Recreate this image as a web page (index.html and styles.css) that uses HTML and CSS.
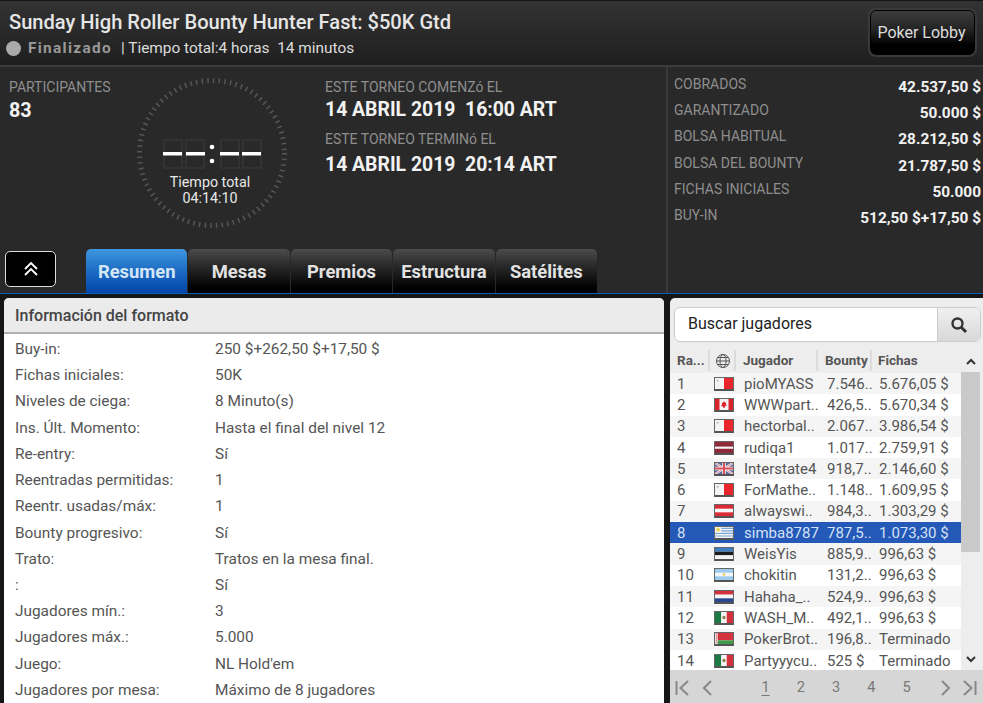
FILE: index.html
```html
<!DOCTYPE html>
<html lang="es">
  <head>
    <meta charset="UTF-8" />
    <title>Sunday High Roller Bounty Hunter Fast</title>
    <link rel="stylesheet" href="styles.css">
  </head>
  <body>
    <svg class="defs" width="0" height="0">
      <symbol id="f-mt" viewBox="0 0 20 12" preserveAspectRatio="none"><rect width="10" height="12" fill="#f4f4f4"/><rect x="10" width="10" height="12" fill="#e8262b"/><rect x="2" y="2" width="2" height="2" fill="#bbb"/></symbol>
      <symbol id="f-ca" viewBox="0 0 20 12" preserveAspectRatio="none"><rect width="20" height="12" fill="#f4f4f4"/><rect width="5" height="12" fill="#d9232a"/><rect x="15" width="5" height="12" fill="#d9232a"/><path d="M10 2l1 2 1.500-.5-.5 3 1-.5v1l-2 1v1.500h-2V8.500l-2-1v-1l1 .5-.5-3L9 4z" fill="#d9232a"/></symbol>
      <symbol id="f-lv" viewBox="0 0 20 12" preserveAspectRatio="none"><rect width="20" height="12" fill="#8e2b3a"/><rect y="5" width="20" height="2.400" fill="#f4f4f4"/></symbol>
      <symbol id="f-gb" viewBox="0 0 20 12" preserveAspectRatio="none"><rect width="20" height="12" fill="#5a6aa0"/><path d="M0 0l20 12M20 0L0 12" stroke="#f4f4f4" stroke-width="2.400"/><path d="M0 0l20 12M20 0L0 12" stroke="#d9606a" stroke-width=".8"/><path d="M10 0v12M0 6h20" stroke="#f4f4f4" stroke-width="4"/><path d="M10 0v12M0 6h20" stroke="#d9505a" stroke-width="2.200"/></symbol>
      <symbol id="f-at" viewBox="0 0 20 12" preserveAspectRatio="none"><rect width="20" height="12" fill="#dc2b35"/><rect y="4" width="20" height="4" fill="#f6f6f6"/></symbol>
      <symbol id="f-uy" viewBox="0 0 20 12" preserveAspectRatio="none"><rect width="20" height="12" fill="#f4f4f4"/><path d="M0 1.500h20M0 4.200h20M0 7h20M0 9.800h20" stroke="#7aa6d8" stroke-width="1.300"/><rect width="7" height="6" fill="#f4f4f4"/><circle cx="3.500" cy="3" r="2" fill="#f0d040"/></symbol>
      <symbol id="f-ee" viewBox="0 0 20 12" preserveAspectRatio="none"><rect width="20" height="4" fill="#3f7fc4"/><rect y="4" width="20" height="4" fill="#1c1c1c"/><rect y="8" width="20" height="4" fill="#f4f4f4"/></symbol>
      <symbol id="f-ar" viewBox="0 0 20 12" preserveAspectRatio="none"><rect width="20" height="12" fill="#9ccbee"/><rect y="4" width="20" height="4" fill="#f6f6f6"/><circle cx="10" cy="6" r="1.300" fill="#ecc94b"/></symbol>
      <symbol id="f-nl" viewBox="0 0 20 12" preserveAspectRatio="none"><rect width="20" height="4" fill="#d3303c"/><rect y="4" width="20" height="4" fill="#f6f6f6"/><rect y="8" width="20" height="4" fill="#27478f"/></symbol>
      <symbol id="f-mx" viewBox="0 0 20 12" preserveAspectRatio="none"><rect width="7" height="12" fill="#1d7a45"/><rect x="7" width="6" height="12" fill="#f4f4f4"/><rect x="13" width="7" height="12" fill="#d3303c"/><circle cx="10" cy="6" r="1.800" fill="#8b7a4a"/></symbol>
      <symbol id="f-by" viewBox="0 0 20 12" preserveAspectRatio="none"><rect width="20" height="8" fill="#d3333c"/><rect y="8" width="20" height="4" fill="#3f9a4a"/><rect width="3" height="12" fill="#efe6e6"/><path d="M1.500 0v12" stroke="#d3333c" stroke-dasharray="1 1"/></symbol>
    </svg>

    <div class="page">
      <header class="top">
        <div class="top-text">
          <h1>Sunday High Roller Bounty Hunter Fast: $50K Gtd</h1>
          <div class="status">
            <span class="dot"></span>
            <b>Finalizado</b>
            <span>| Tiempo total:4 horas&nbsp; 14 minutos</span>
          </div>
        </div>
        <button class="lobby" type="button">Poker Lobby</button>
      </header>

      <section class="info">
        <div class="info-main">
          <div class="info-row">
            <div class="players">
              <div class="lbl">PARTICIPANTES</div>
              <div class="big">83</div>
            </div>
            <svg class="clock" width="152" height="152" viewBox="0 0 152 152">
              <circle cx="76" cy="76" r="72.500" fill="none" stroke="#565656" stroke-width="5" stroke-dasharray="1.500 4.200"/>
              <g class="seg-off">
                <rect x="28" y="63" width="18" height="28"/>
                <rect x="50" y="63" width="18" height="28"/>
                <rect x="85" y="63" width="18" height="28"/>
                <rect x="107" y="63" width="18" height="28"/>
              </g>
              <g fill="#fff">
                <rect x="27" y="75" width="19" height="3.500"/>
                <rect x="50" y="75" width="19" height="3.500"/>
                <rect x="84" y="75" width="19" height="3.500"/>
                <rect x="106" y="75" width="19" height="3.500"/>
                <circle cx="76" cy="70" r="2.300"/>
                <circle cx="76" cy="84" r="2.300"/>
              </g>
              <text class="clock-txt" x="74" y="110" text-anchor="middle">Tiempo total</text>
              <text class="clock-txt" x="74" y="126" text-anchor="middle">04:14:10</text>
            </svg>
            <div class="dates">
              <div class="lbl">ESTE TORNEO COMENZó EL</div>
              <div class="date">14 ABRIL 2019&nbsp; 16:00 ART</div>
              <div class="lbl">ESTE TORNEO TERMINó EL</div>
              <div class="date date-end">14 ABRIL 2019&nbsp; 20:14 ART</div>
            </div>
          </div>
          <nav class="tabs-row">
            <button class="toggle" type="button">
              <svg width="16" height="16" viewBox="0 0 16 16" fill="none" stroke="#fff" stroke-width="1.800"><path d="M2 8l6-6 6 6M2 14l6-6 6 6"/></svg>
            </button>
            <div class="tabs">
              <a class="tab tab-on">Resumen</a>
              <a class="tab">Mesas</a>
              <a class="tab">Premios</a>
              <a class="tab">Estructura</a>
              <a class="tab">Satélites</a>
            </div>
          </nav>
        </div>
        <div class="money">
          <div class="money-row"><span class="lbl">COBRADOS</span><b>42.537,50 $</b></div>
          <div class="money-row"><span class="lbl">GARANTIZADO</span><b>50.000 $</b></div>
          <div class="money-row"><span class="lbl">BOLSA HABITUAL</span><b>28.212,50 $</b></div>
          <div class="money-row"><span class="lbl">BOLSA DEL BOUNTY</span><b>21.787,50 $</b></div>
          <div class="money-row"><span class="lbl">FICHAS INICIALES</span><b>50.000</b></div>
          <div class="money-row"><span class="lbl">BUY-IN</span><b>512,50 $+17,50 $</b></div>
        </div>
      </section>

      <main class="content">
        <section class="format">
          <h2>Información del formato</h2>
          <dl class="format-list">
            <div><dt>Buy-in:</dt><dd>250 $+262,50 $+17,50 $</dd></div>
            <div><dt>Fichas iniciales:</dt><dd>50K</dd></div>
            <div><dt>Niveles de ciega:</dt><dd>8 Minuto(s)</dd></div>
            <div><dt>Ins. Últ. Momento:</dt><dd>Hasta el final del nivel 12</dd></div>
            <div><dt>Re-entry:</dt><dd>Sí</dd></div>
            <div><dt>Reentradas permitidas:</dt><dd>1</dd></div>
            <div><dt>Reentr. usadas/máx:</dt><dd>1</dd></div>
            <div><dt>Bounty progresivo:</dt><dd>Sí</dd></div>
            <div><dt>Trato:</dt><dd>Tratos en la mesa final.</dd></div>
            <div><dt>:</dt><dd>Sí</dd></div>
            <div><dt>Jugadores mín.:</dt><dd>3</dd></div>
            <div><dt>Jugadores máx.:</dt><dd>5.000</dd></div>
            <div><dt>Juego:</dt><dd>NL Hold'em</dd></div>
            <div><dt>Jugadores por mesa:</dt><dd>Máximo de 8 jugadores</dd></div>
          </dl>
        </section>

        <aside class="side">
          <div class="search">
            <span class="search-text">Buscar jugadores</span>
            <span class="search-btn">
              <svg width="18" height="18" viewBox="0 0 18 18" fill="none" stroke="#333"><circle cx="7.500" cy="7.500" r="5" stroke-width="2.400"/><path d="M11.500 11.500l4.500 4.500" stroke-width="3"/></svg>
            </span>
          </div>
          <div class="grid-wrap">
            <div class="grid">
              <div class="grid-head">
                <span>Ra...</span>
                <span class="globe"><svg width="16" height="16" viewBox="0 0 16 16" fill="none" stroke="#555"><circle cx="8" cy="8" r="6.500"/><ellipse cx="8" cy="8" rx="3" ry="6.500"/><path d="M1.500 8h13M2.500 4.500h11M2.500 11.500h11"/></svg></span>
                <span>Jugador</span>
                <span>Bounty</span>
                <span>Fichas</span>
              </div>
              <div class="grid-row"><span>1</span><svg class="flag"><use href="#f-mt"/></svg><span class="name">pioMYASS</span><span>7.546..</span><span>5.676,05 $</span></div>
              <div class="grid-row"><span>2</span><svg class="flag"><use href="#f-ca"/></svg><span class="name">WWWpart..</span><span>426,5..</span><span>5.670,34 $</span></div>
              <div class="grid-row"><span>3</span><svg class="flag"><use href="#f-mt"/></svg><span class="name">hectorbal..</span><span>2.067..</span><span>3.986,54 $</span></div>
              <div class="grid-row"><span>4</span><svg class="flag"><use href="#f-lv"/></svg><span class="name">rudiqa1</span><span>1.017..</span><span>2.759,91 $</span></div>
              <div class="grid-row"><span>5</span><svg class="flag"><use href="#f-gb"/></svg><span class="name">Interstate4</span><span>918,7..</span><span>2.146,60 $</span></div>
              <div class="grid-row"><span>6</span><svg class="flag"><use href="#f-mt"/></svg><span class="name">ForMathe..</span><span>1.148..</span><span>1.609,95 $</span></div>
              <div class="grid-row"><span>7</span><svg class="flag"><use href="#f-at"/></svg><span class="name">alwayswi..</span><span>984,3..</span><span>1.303,29 $</span></div>
              <div class="grid-row is-me"><span>8</span><svg class="flag"><use href="#f-uy"/></svg><span class="name">simba8787</span><span>787,5..</span><span>1.073,30 $</span></div>
              <div class="grid-row"><span>9</span><svg class="flag"><use href="#f-ee"/></svg><span class="name">WeisYis</span><span>885,9..</span><span>996,63 $</span></div>
              <div class="grid-row"><span>10</span><svg class="flag"><use href="#f-ar"/></svg><span class="name">chokitin</span><span>131,2..</span><span>996,63 $</span></div>
              <div class="grid-row"><span>11</span><svg class="flag"><use href="#f-nl"/></svg><span class="name">Hahaha_..</span><span>524,9..</span><span>996,63 $</span></div>
              <div class="grid-row"><span>12</span><svg class="flag"><use href="#f-mx"/></svg><span class="name">WASH_M..</span><span>492,1..</span><span>996,63 $</span></div>
              <div class="grid-row"><span>13</span><svg class="flag"><use href="#f-by"/></svg><span class="name">PokerBrot..</span><span>196,8..</span><span>Terminado</span></div>
              <div class="grid-row"><span>14</span><svg class="flag"><use href="#f-mx"/></svg><span class="name">Partyyycu..</span><span>525 $</span><span>Terminado</span></div>
            </div>
            <div class="scroll">
              <svg class="scroll-arrow" width="12" height="22" viewBox="0 0 12 22" fill="none" stroke="#333" stroke-width="2"><path d="M2 14l4-4 4 4"/></svg>
              <div class="thumb"></div>
              <svg class="scroll-arrow" width="12" height="22" viewBox="0 0 12 22" fill="none" stroke="#333" stroke-width="2"><path d="M2 9l4 4 4-4"/></svg>
            </div>
          </div>
          <div class="pager">
            <svg width="15" height="16" viewBox="0 0 15 16" fill="none" stroke="#888" stroke-width="2"><path d="M1.500 1v14M13 1L5.500 8l7.500 7"/></svg>
            <svg class="pg-prev" width="10" height="16" viewBox="0 0 10 16" fill="none" stroke="#888" stroke-width="2"><path d="M9 1L2 8l7 7"/></svg>
            <a class="pg-num pg-on">1</a>
            <a class="pg-num">2</a>
            <a class="pg-num">3</a>
            <a class="pg-num">4</a>
            <a class="pg-num">5</a>
            <svg class="pg-next" width="10" height="16" viewBox="0 0 10 16" fill="none" stroke="#888" stroke-width="2"><path d="M1 1l7 7-7 7"/></svg>
            <svg width="15" height="16" viewBox="0 0 15 16" fill="none" stroke="#888" stroke-width="2"><path d="M13.500 1v14M2 1l7.500 7L2 15"/></svg>
          </div>
        </aside>
      </main>
    </div>
  </body>
</html>
```

FILE: styles.css
```css
* {
  box-sizing: border-box;
}

html,
body {
  margin: 0;
  height: 100%;
  overflow: hidden;
}

body {
  background: #161616;
  font-family: Roboto, "Liberation Sans", sans-serif;
}

.defs {
  position: absolute;
}

.page {
  width: 983px;
  height: 703px;
  display: flex;
  flex-direction: column;
}

/* top bar */
.top {
  height: 67px;
  flex: none;
  display: flex;
  justify-content: space-between;
  align-items: flex-start;
  padding: 10px 9px 0 9px;
  background: linear-gradient(#333 0%, #1f1f1f 100%);
  border-top: 1px solid #151515;
  border-bottom: 2px solid #3c3c3c;
}

.top h1 {
  margin: 0;
  font-size: 20.100px;
  line-height: 23px;
  font-weight: 500;
  color: #e6e6e6;
}

.status {
  display: flex;
  align-items: center;
  margin-top: 5px;
  margin-left: -3px;
  font-size: 15.400px;
  line-height: 18px;
  color: #ddd;
}

.dot {
  width: 15px;
  height: 15px;
  border-radius: 50%;
  background: #aaa;
  margin-right: 7px;
}

.status b {
  color: #999;
  font-weight: 700;
  letter-spacing: 1.300px;
  margin-right: 9px;
}

.lobby {
  width: 105px;
  height: 45px;
  flex: none;
  margin-top: -1px;
  margin-right: -1px;
  padding: 0 2px 0 0;
  font-family: inherit;
  font-size: 16px;
  white-space: nowrap;
  color: #ddd;
  border: 1px solid #000;
  border-radius: 6px;
  outline: 2px solid #3a3a3a;
  outline-offset: 0;
  background: linear-gradient(#3c3c3c 0%, #222 45%, #000 80%);
}

/* stats */
.info {
  height: 227px;
  flex: none;
  display: flex;
  background: #292929;
  border-bottom: 1px solid #0c5fb8;
}

.info-main {
  width: 668px;
  flex: none;
  display: flex;
  flex-direction: column;
  border-right: 2px solid #3a3a3a;
}

.info-row {
  height: 182px;
  flex: none;
  display: flex;
  padding: 12px 0 0 9px;
}

.lbl {
  font-size: 14px;
  line-height: 16px;
  color: #8e8e8e;
}

.players {
  width: 127px;
  flex: none;
}

.big {
  margin-top: 5px;
  font-size: 19.800px;
  line-height: 21px;
  font-weight: 700;
  color: #f2f2f2;
}

.clock {
  flex: none;
  margin-top: -2px;
}

.seg-off {
  fill: none;
  stroke: #363636;
  stroke-width: 1.500;
}

.clock-txt {
  font-size: 14.300px;
  fill: #e8e8e8;
}

.dates {
  margin-left: 37px;
}

.date {
  margin-top: 4px;
  margin-bottom: 11px;
  font-size: 19.400px;
  line-height: 21px;
  font-weight: 700;
  color: #f2f2f2;
}

.date-end {
  margin-top: 7px;
}

.tabs-row {
  flex: 1;
  display: flex;
  align-items: flex-end;
  padding-left: 5px;
}

.toggle {
  width: 51px;
  height: 36px;
  margin-bottom: 6px;
  padding: 0;
  background: #000;
  border: 1px solid #ddd;
  border-radius: 5px;
  display: flex;
  align-items: center;
  justify-content: center;
}

.tabs {
  display: flex;
  gap: 1px;
  margin-left: 30px;
}

.tab {
  width: 101.400px;
  height: 44px;
  display: flex;
  align-items: center;
  justify-content: center;
  font-size: 18.400px;
  font-weight: 700;
  color: #e2e2e2;
  border-radius: 5px 5px 0 0;
  background: linear-gradient(#4c4c4c 0%, #2c2c2c 35%, #000 90%);
}

.tab-on {
  color: #d5e6f7;
  background: linear-gradient(#3f97de 0%, #1d6cc4 50%, #0344ab 100%);
}

.money {
  flex: 1;
  padding: 9px 2px 0 6px;
}

.money-row {
  height: 26.200px;
  display: flex;
  justify-content: space-between;
  align-items: flex-start;
}

.money-row .lbl {
  line-height: 17px;
}

.money-row b {
  margin-top: 2px;
  font-size: 15.400px;
  line-height: 18px;
  color: #f2f2f2;
}

/* lower part */
.content {
  flex: 1;
  min-height: 0;
  display: flex;
  padding: 4px 0 0 4px;
}

.format {
  width: 660px;
  flex: none;
  background: #fff;
  border-radius: 5px 5px 0 0;
  overflow: hidden;
}

.format h2 {
  margin: 0;
  height: 36px;
  padding: 0 11px;
  font-size: 16px;
  line-height: 35px;
  font-weight: 500;
  color: #444;
  background: #ebebeb;
  border-bottom: 2px solid #b0b0b0;
}

.format-list {
  margin: 0;
  padding-top: 3px;
}

.format-list div {
  height: 26.230px;
  display: flex;
  padding-left: 11px;
  font-size: 15.400px;
  line-height: 24px;
  color: #555;
}

.format-list dt {
  width: 200px;
}

.format-list dd {
  margin: 0;
}

.side {
  width: 313px;
  margin-left: 6px;
  flex: none;
  display: flex;
  flex-direction: column;
  background: #ededed;
  border-radius: 5px 0 0 0;
  overflow: hidden;
}

.search {
  height: 35px;
  flex: none;
  margin: 9px 2px 8px 4px;
  display: flex;
  background: #fff;
  border: 1px solid #ccc;
  border-radius: 6px;
  overflow: hidden;
}

.search-text {
  flex: 1;
  padding-left: 13px;
  font-size: 16px;
  line-height: 32px;
  color: #222;
}

.search-btn {
  width: 43px;
  display: flex;
  align-items: center;
  justify-content: center;
  background: linear-gradient(#f0f0f0, #d8d8d8);
  border-left: 1px solid #ccc;
}

.grid-wrap {
  flex: 1;
  min-height: 0;
  display: flex;
}

.grid {
  width: 291px;
  flex: none;
}

.grid-head {
  display: grid;
  grid-template-columns: 40px 26px 82px 54px 1fr;
  align-items: start;
  height: 23px;
  font-size: 13.500px;
  font-weight: 700;
  color: #555;
}

.grid-head span {
  padding-left: 7px;
  height: 21px;
  line-height: 21px;
  border-right: 2px solid #dcdcdc;
}

.grid-head span:last-child {
  border-right: none;
  padding-left: 6px;
}

.grid-head .globe {
  padding-left: 5px;
  display: flex;
  align-items: center;
}

.grid-row {
  display: grid;
  grid-template-columns: 40px 34px 75px 52px 1fr;
  align-items: center;
  height: 21.300px;
  font-size: 15px;
  color: #555;
  background: #fff;
  white-space: nowrap;
}

.grid-row:nth-child(even) {
  background: #f5f5f5;
}

.grid-row span {
  padding-left: 8px;
}

.grid-row span:first-child {
  padding-left: 7px;
}

.grid-row .name {
  padding-left: 0;
  overflow: hidden;
}

.grid-row.is-me {
  background: #2459b8;
  color: #d5e2f5;
}

.flag {
  width: 20px;
  height: 14px;
  margin-left: 4px;
  border: 1px solid #666;
  border-bottom: 2px solid #555;
}

.scroll {
  width: 19px;
  flex: none;
  display: flex;
  flex-direction: column;
  align-items: center;
}

.scroll-arrow {
  flex: none;
}

.thumb {
  width: 100%;
  height: 180px;
  background: #c9c9c9;
  margin-bottom: auto;
}

.pager {
  height: 33px;
  flex: none;
  display: flex;
  align-items: center;
  padding: 2px 5px 0;
  background: #d6d6d6;
}

.pg-prev {
  margin-left: 12px;
  margin-right: 36px;
}

.pg-num {
  width: 35.250px;
  flex: none;
  text-align: center;
  font-size: 14.500px;
  color: #777;
}

.pg-on {
  text-decoration: underline;
  text-underline-offset: 3px;
}

.pg-next {
  flex: none;
  margin-left: 17px;
  margin-right: 11px;
}
```
